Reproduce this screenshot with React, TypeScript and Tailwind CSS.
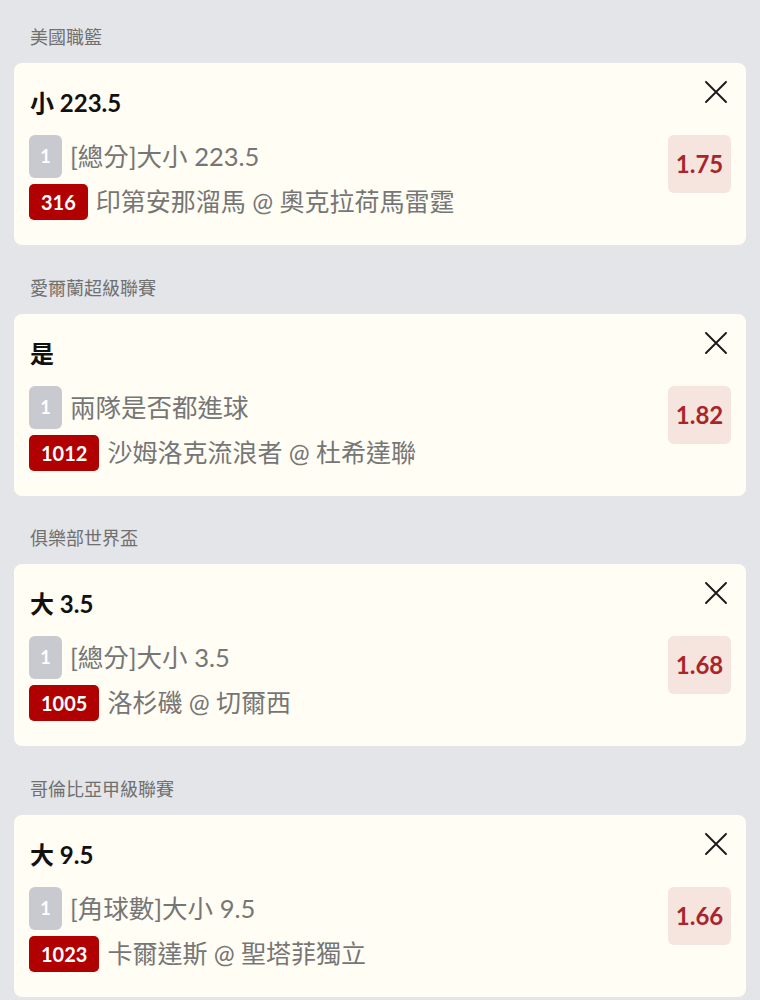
import React from "react";

type Bet = {
  league: string;
  title: string;
  market: string;
  code: string;
  match: string;
  odds: string;
};

const bets: Bet[] = [
  {
    league: "美國職籃",
    title: "小 223.5",
    market: "[總分]大小 223.5",
    code: "316",
    match: "印第安那溜馬 @ 奧克拉荷馬雷霆",
    odds: "1.75",
  },
  {
    league: "愛爾蘭超級聯賽",
    title: "是",
    market: "兩隊是否都進球",
    code: "1012",
    match: "沙姆洛克流浪者 @ 杜希達聯",
    odds: "1.82",
  },
  {
    league: "俱樂部世界盃",
    title: "大 3.5",
    market: "[總分]大小 3.5",
    code: "1005",
    match: "洛杉磯 @ 切爾西",
    odds: "1.68",
  },
  {
    league: "哥倫比亞甲級聯賽",
    title: "大 9.5",
    market: "[角球數]大小 9.5",
    code: "1023",
    match: "卡爾達斯 @ 聖塔菲獨立",
    odds: "1.66",
  },
];

const font = {
  fontFamily: 'Lato, "Noto Sans CJK TC", sans-serif',
};

const CloseIcon = () => (
  <svg width="22" height="22" viewBox="0 0 22 22" fill="none">
    <path d="M1 1L21 21M21 1L1 21" stroke="#1a1a1a" strokeWidth="1.9" strokeLinecap="round" />
  </svg>
);

const BetCard = ({ bet }: { bet: Bet }) => (
  <div className="flex flex-col">
    <div className="h-[24px] pl-[16px] text-[18px] leading-[24px] text-[#707070] mb-[14px]">
      {bet.league}
    </div>
    <div className="flex rounded-[8px] bg-[#fffdf4] pl-[15px] pr-[15px]">
      <div className="flex flex-1 flex-col pt-[26px] pb-[25px]">
        <div className="pl-[1px] text-[24px] leading-[28px] font-bold text-[#111]">{bet.title}</div>
        <div className="mt-[18px] flex h-[43px] items-center gap-[8px]">
          <span className="flex h-[43px] w-[33px] items-center justify-center rounded-[6px] bg-[#c9c9d0] text-[18px] font-bold text-white">
            1
          </span>
          <span className="text-[25.5px] text-[#767676]">{bet.market}</span>
        </div>
        <div className="mt-[6px] flex h-[36px] items-center gap-[8px]">
          <span className="flex h-[36px] items-center rounded-[5px] bg-[#b10000] px-[12px] text-[20px] font-bold text-white">
            {bet.code}
          </span>
          <span className="text-[25px] text-[#767676]">{bet.match}</span>
        </div>
      </div>
      <div className="flex flex-col items-end pt-[18px]">
        <div className="mr-[4px]">
          <CloseIcon />
        </div>
        <div className="mt-[32px] flex h-[58px] w-[63px] items-center justify-center rounded-[6px] bg-[#f6e5df] text-[24px] font-bold text-[#a8262b]">
          {bet.odds}
        </div>
      </div>
    </div>
  </div>
);

export default function App() {
  return (
    <div className="min-h-screen bg-[#e4e5e8] px-[14px] pt-[25px] pb-[4px]" style={font}>
      <div className="flex flex-col gap-[30.5px]">
        {bets.map((bet) => (
          <BetCard key={bet.code} bet={bet} />
        ))}
      </div>
    </div>
  );
}
